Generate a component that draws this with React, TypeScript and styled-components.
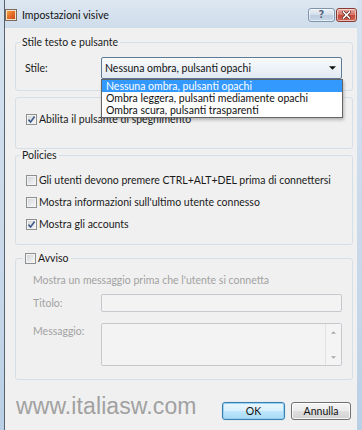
import React from "react";
import styled, { createGlobalStyle } from "styled-components";

const UI = `Lato, "Open Sans", "Noto Sans", sans-serif`;

const GlobalStyle = createGlobalStyle`
  html, body { margin: 0; padding: 0; }
  body { background: #c9d9ea; font-family: ${UI}; }
  * { box-sizing: border-box; }
`;

const Window = styled.div`
  width: 362px;
  height: 430px;
  display: flex;
  padding: 0 5px 0 4px;
  background: linear-gradient(#d6e2ef, #c6d7e9 70%, #b9cfe5);
  overflow: hidden;
`;

const Inner = styled.div`
  flex: 1;
  min-width: 0;
  display: flex;
  flex-direction: column;
  border-left: 1px solid #56636f;
`;

const TitleBar = styled.div`
  height: 28px;
  flex: none;
  display: flex;
  align-items: center;
  padding: 2px 0 0 0;
  background: linear-gradient(#dde7f2, #cfdcea);
`;

const AppIcon = styled.span`
  width: 12px;
  height: 12px;
  flex: none;
  border: 1px solid #7b6a5e;
  box-shadow: inset 0 0 0 1px #f4e2c8;
  background: linear-gradient(135deg, #f7b042 0%, #e8722a 45%, #c7401a 100%);
`;

const TitleText = styled.span`
  margin-left: 5px;
  font-size: 10.5px;
  line-height: 13px;
  color: #111;
`;

const CaptionButtons = styled.div`
  margin-left: auto;
  align-self: flex-start;
  margin-top: 6px;
  display: flex;
  gap: 1px;
`;

const CapBtn = styled.div<{ $close?: boolean }>`
  width: ${(p) => (p.$close ? 21 : 27)}px;
  height: 14px;
  border: 1px solid ${(p) => (p.$close ? "#8a3b31" : "#7f93aa")};
  border-radius: 3px;
  display: flex;
  align-items: center;
  justify-content: center;
  background: ${(p) =>
    p.$close
      ? "linear-gradient(#e8a99f 0%, #d9796b 45%, #c5473a 55%, #d46a55 100%)"
      : "linear-gradient(#eaf0f6 0%, #d5e0ec 45%, #bccde0 55%, #c9d8e8 100%)"};
  box-shadow: inset 0 0 0 1px rgba(255, 255, 255, 0.55);
  font-family: "DejaVu Sans", sans-serif;
  font-weight: bold;
  font-size: 10px;
  line-height: 10px;
  color: #4f6582;
  text-shadow: 0 0 1px #fff;
`;

const Client = styled.div`
  flex: 1;
  display: flex;
  flex-direction: column;
  padding: 8px 4px 0 10px;
  background: #f0f0f0;
`;

const Group = styled.fieldset<{ $h: number; $mt: number }>`
  margin: ${(p) => p.$mt}px 0 0 0;
  padding: 0;
  min-width: 0;
  flex: none;
  height: ${(p) => p.$h}px;
  border: 1px solid #d5dfe5;
  border-radius: 3px;
  position: relative;
`;

const Legend = styled.legend<{ $ml: number }>`
  margin-left: ${(p) => p.$ml}px;
  padding: 0 2px;
  display: flex;
  align-items: center;
  gap: 2px;
  height: ${(p) => (p.$ml > 5 ? 14 : 12)}px;
  font-size: 10.5px;
  line-height: 12px;
  color: #1a1a1a;
`;

const Body = styled.div<{ $pt: number; $pl: number; $gap?: number }>`
  display: flex;
  flex-direction: column;
  gap: ${(p) => p.$gap ?? 0}px;
  padding: ${(p) => p.$pt}px 10px 0 ${(p) => p.$pl}px;
`;

const FieldRow = styled.div<{ $lw: number; $mt?: number; $top?: boolean }>`
  display: grid;
  grid-template-columns: ${(p) => p.$lw}px 1fr;
  align-items: ${(p) => (p.$top ? "start" : "center")};
  margin-top: ${(p) => p.$mt ?? 0}px;
`;

const Label = styled.span<{ $disabled?: boolean }>`
  font-size: 10.5px;
  line-height: 16px;
  color: ${(p) => (p.$disabled ? "#a2a2a2" : "#1a1a1a")};
`;

const Combo = styled.div`
  position: relative;
  height: 22px;
  display: flex;
  align-items: center;
  padding: 0 5px 0 3px;
  border: 1px solid #5d7a98;
  border-radius: 2px;
  background: linear-gradient(#f8fafc, #edf2f7 50%, #e2eaf2);
  font-size: 10.5px;
  color: #111;
`;

const ComboText = styled.span`
  flex: 1;
  white-space: nowrap;
`;

const DropList = styled.div`
  position: absolute;
  left: -1px;
  top: 21px;
  width: 242px;
  padding: 0 0 1px 0;
  background: #fff;
  border: 1px solid #646464;
  box-shadow: 1px 2px 3px rgba(0, 0, 0, 0.25);
  z-index: 5;
`;

const DropItem = styled.div<{ $active?: boolean }>`
  height: 12px;
  line-height: 12px;
  padding-left: 4px;
  font-size: 10.5px;
  white-space: nowrap;
  background: ${(p) => (p.$active ? "#3399ff" : "transparent")};
  color: ${(p) => (p.$active ? "#fff" : "#111")};
`;

const CheckRow = styled.label<{ $disabled?: boolean }>`
  display: flex;
  align-items: center;
  gap: 2px;
  height: 16px;
  font-size: 10.5px;
  color: ${(p) => (p.$disabled ? "#a2a2a2" : "#1a1a1a")};
  white-space: nowrap;
`;

const Box = styled.span`
  width: 11px;
  height: 11px;
  flex: none;
  display: flex;
  align-items: center;
  justify-content: center;
  border: 1px solid #8e8f8f;
  box-shadow: inset 0 0 0 1px #f4f4f4;
  background: linear-gradient(135deg, #cfd2d6 0%, #e9eaec 60%, #f7f7f7 100%);
`;

const TextBox = styled.div<{ $h: number }>`
  height: ${(p) => p.$h}px;
  display: flex;
  justify-content: flex-end;
  border: 1px solid #c5c9ce;
  border-radius: 2px;
  background: #f3f3f3;
`;

const ScrollBar = styled.div`
  width: 16px;
  display: flex;
  flex-direction: column;
  justify-content: space-between;
  align-items: center;
  padding: 7px 0 6px;
  border-left: 1px solid #e2e2e2;
  background: #f4f4f4;
`;

const Footer = styled.div`
  flex: 1;
  display: flex;
  align-items: flex-start;
  padding: 22px 2px 0 1px;
`;

const Watermark = styled.span`
  margin-top: -7px;
  font-family: "Liberation Sans", Arial, sans-serif;
  font-size: 23px;
  line-height: 23px;
  color: #a1a1a1;
  letter-spacing: 0.1px;
`;

const Buttons = styled.div`
  margin-left: auto;
  display: flex;
  gap: 6px;
`;

const Button = styled.button<{ $w: number; $default?: boolean }>`
  width: ${(p) => p.$w}px;
  height: 18px;
  padding: 0;
  border: 1px solid ${(p) => (p.$default ? "#3c7fb1" : "#707070")};
  border-radius: 3px;
  background: ${(p) =>
    p.$default
      ? "linear-gradient(#eaf6fd 0%, #d9f0fc 48%, #bee6fd 52%, #a7d9f5 100%)"
      : "linear-gradient(#f4f4f4 0%, #ececec 48%, #dfdfdf 52%, #d2d2d2 100%)"};
  box-shadow: ${(p) =>
    p.$default
      ? "inset 0 0 0 1px #98d1ef, 0 0 1px #7fc0e8"
      : "inset 0 0 0 1px rgba(255,255,255,0.8)"};
  font-family: ${UI};
  font-size: 10.5px;
  color: #111;
`;

const Check = () => (
  <svg width="9" height="9" viewBox="0 0 9 9">
    <path d="M1.4 4.6 L3.6 7 L7.6 1.6" fill="none" stroke="#3f5a8c" strokeWidth="1.6" />
  </svg>
);

const CheckBox: React.FC<{ checked?: boolean }> = ({ checked }) => (
  <Box>{checked ? <Check /> : null}</Box>
);

const Arrow: React.FC<{ up?: boolean; color?: string; w?: number }> = ({ up, color = "#111", w = 7 }) => (
  <svg width={w} height={Math.ceil(w / 2)} viewBox="0 0 8 4">
    <path d={up ? "M0 4 L4 0 L8 4 Z" : "M0 0 L8 0 L4 4 Z"} fill={color} />
  </svg>
);

const CloseGlyph = () => (
  <svg width="9" height="8" viewBox="0 0 9 8">
    <path d="M1.5 1 L7.5 7 M7.5 1 L1.5 7" stroke="#5a231c" strokeWidth="3" strokeLinecap="square" />
    <path d="M1.5 1 L7.5 7 M7.5 1 L1.5 7" stroke="#ffffff" strokeWidth="1.6" strokeLinecap="square" />
  </svg>
);

export default function App() {
  return (
    <>
      <GlobalStyle />
      <Window>
        <Inner>
          <TitleBar>
            <AppIcon />
            <TitleText>Impostazioni visive</TitleText>
            <CaptionButtons>
              <CapBtn>?</CapBtn>
              <CapBtn $close>
                <CloseGlyph />
              </CapBtn>
            </CaptionButtons>
          </TitleBar>
          <Client>
            <Group $h={55} $mt={0}>
              <Legend $ml={4}>Stile testo e pulsante</Legend>
              <Body $pt={9} $pl={9}>
                <FieldRow $lw={76}>
                  <Label>Stile:</Label>
                  <Combo>
                    <ComboText>Nessuna ombra, pulsanti opachi</ComboText>
                    <Arrow />
                    <DropList>
                      <DropItem $active>Nessuna ombra, pulsanti opachi</DropItem>
                      <DropItem>Ombra leggera, pulsanti mediamente opachi</DropItem>
                      <DropItem>Ombra scura, pulsanti trasparenti</DropItem>
                    </DropList>
                  </Combo>
                </FieldRow>
              </Body>
            </Group>

            <Group $h={52} $mt={6}>
              <Body $pt={13} $pl={10}>
                <CheckRow>
                  <CheckBox checked />
                  Abilita il pulsante di spegnimento
                </CheckRow>
              </Body>
            </Group>

            <Group $h={96} $mt={0}>
              <Legend $ml={4}>Policies</Legend>
              <Body $pt={11} $pl={10} $gap={6}>
                <CheckRow>
                  <CheckBox />
                  Gli utenti devono premere CTRL+ALT+DEL prima di connettersi
                </CheckRow>
                <CheckRow>
                  <CheckBox />
                  Mostra informazioni sull'ultimo utente connesso
                </CheckRow>
                <CheckRow>
                  <CheckBox checked />
                  Mostra gli accounts
                </CheckRow>
              </Body>
            </Group>

            <Group $h={129} $mt={6}>
              <Legend $ml={7}>
                <CheckBox />
                Avviso
              </Legend>
              <Body $pt={7} $pl={17}>
                <Label $disabled>Mostra un messaggio prima che l'utente si connetta</Label>
                <FieldRow $lw={68} $mt={6}>
                  <Label $disabled>Titolo:</Label>
                  <TextBox $h={18} />
                </FieldRow>
                <FieldRow $lw={68} $mt={11} $top>
                  <Label $disabled>Messaggio:</Label>
                  <TextBox $h={43}>
                    <ScrollBar>
                      <Arrow up color="#a8a8a8" w={5} />
                      <Arrow color="#a8a8a8" w={5} />
                    </ScrollBar>
                  </TextBox>
                </FieldRow>
              </Body>
            </Group>

            <Footer>
              <Watermark>www.italiasw.com</Watermark>
              <Buttons>
                <Button $w={63} $default>
                  OK
                </Button>
                <Button $w={60}>Annulla</Button>
              </Buttons>
            </Footer>
          </Client>
        </Inner>
      </Window>
    </>
  );
}
